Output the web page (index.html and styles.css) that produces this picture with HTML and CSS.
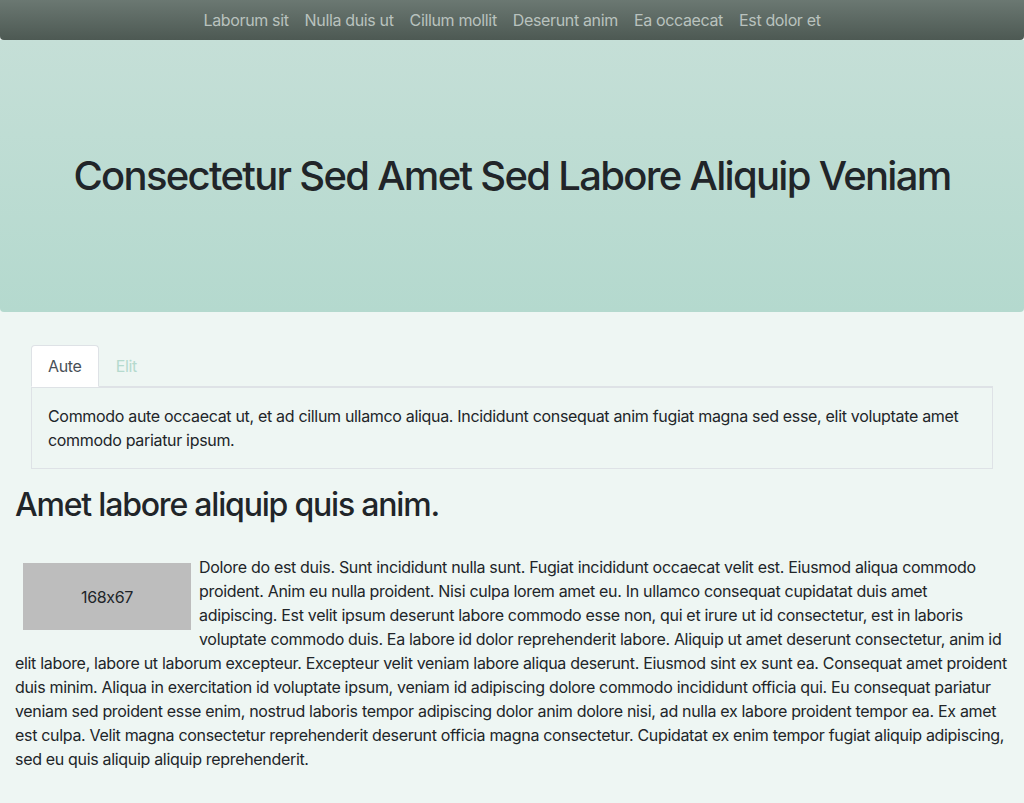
FILE: index.html
```html
<!DOCTYPE html>
<html lang="en">
<head>
<meta charset="utf-8">
<title>Page</title>
<link rel="stylesheet" href="styles.css">
</head>
<body>
<nav class="topnav">
  <a href="#">Laborum sit</a>
  <a href="#">Nulla duis ut</a>
  <a href="#">Cillum mollit</a>
  <a href="#">Deserunt anim</a>
  <a href="#">Ea occaecat</a>
  <a href="#">Est dolor et</a>
</nav>
<header class="hero">
  <h1>Consectetur Sed Amet Sed Labore Aliquip Veniam</h1>
</header>
<main class="content">
  <div class="tabs">
    <ul class="tab-list">
      <li class="tab active">Aute</li>
      <li class="tab">Elit</li>
    </ul>
    <div class="tab-panel">
      Commodo aute occaecat ut, et ad cillum ullamco aliqua. Incididunt consequat anim fugiat magna sed esse, elit voluptate amet commodo pariatur ipsum.
    </div>
  </div>
  <h2 class="section-title">Amet labore aliquip quis anim.</h2>
  <div class="article">
    <div class="placeholder">168x67</div>
    <p class="article-text">Dolore do est duis. Sunt incididunt nulla sunt. Fugiat incididunt occaecat velit est. Eiusmod aliqua commodo proident. Anim eu nulla proident. Nisi culpa lorem amet eu. In ullamco consequat cupidatat duis amet adipiscing. Est velit ipsum deserunt labore commodo esse non, qui et irure ut id consectetur, est in laboris voluptate commodo duis. Ea labore id dolor reprehenderit labore. Aliquip ut amet deserunt consectetur, anim id elit labore, labore ut laborum excepteur. Excepteur velit veniam labore aliqua deserunt. Eiusmod sint ex sunt ea. Consequat amet proident duis minim. Aliqua in exercitation id voluptate ipsum, veniam id adipiscing dolore commodo incididunt officia qui. Eu consequat pariatur veniam sed proident esse enim, nostrud laboris tempor adipiscing dolor anim dolore nisi, ad nulla ex labore proident tempor ea. Ex amet est culpa. Velit magna consectetur reprehenderit deserunt officia magna consectetur. Cupidatat ex enim tempor fugiat aliquip adipiscing, sed eu quis aliquip aliquip reprehenderit.</p>
  </div>
</main>
</body>
</html>
```
FILE: styles.css
```css
* { box-sizing: border-box; }
html, body {
  margin: 0;
  padding: 0;
}
body {
  background: #eef6f3;
  color: #212529;
  font-family: Inter, "Noto Sans", "Liberation Sans", sans-serif;
  font-size: 16px;
  line-height: 24px;
  letter-spacing: -0.32px;
  font-feature-settings: "calt" 0;
}
.topnav {
  height: 40px;
  display: flex;
  justify-content: center;
  align-items: center;
  gap: 16px;
  background: linear-gradient(#6b7872, #4d5953);
  border-radius: 0 0 4px 4px;
}
.topnav a {
  color: #b9c2be;
  text-decoration: none;
  font-size: 16px;
  letter-spacing: -0.35px;
}
.hero {
  height: 272px;
  display: flex;
  align-items: center;
  justify-content: center;
  background: linear-gradient(#c5dfd7, #b4d9ce);
  border-radius: 0 0 4px 4px;
}
.hero h1 {
  margin: 0;
  font-size: 40px;
  font-weight: 500;
  line-height: 48px;
  letter-spacing: -1.7px;
  color: #212529;
}
.content {
  padding: 0 15px 24px;
}
.tabs {
  margin: 33px 16px 0;
}
.tab-list {
  list-style: none;
  margin: 0;
  padding: 0;
  display: flex;
  border-bottom: 1px solid #dee2e6;
}
.tab {
  padding: 8px 16px;
  margin-bottom: -1px;
  border: 1px solid transparent;
  border-radius: 4px 4px 0 0;
  color: #b5dace;
}
.tab.active {
  background: #fff;
  color: #495057;
  border-color: #dee2e6 #dee2e6 #fff;
}
.tab-panel {
  border: 1px solid #dee2e6;
  padding: 16px;
}
.section-title {
  margin: 17px 0 31px;
  font-size: 32px;
  font-weight: 500;
  line-height: 38px;
  letter-spacing: -1.2px;
}
.article-text {
  margin: 0;
}
.placeholder {
  float: left;
  width: 168px;
  height: 67px;
  margin: 8px;
  background: #bdbdbd;
  display: flex;
  align-items: center;
  justify-content: center;
  color: #212529;
}
```
